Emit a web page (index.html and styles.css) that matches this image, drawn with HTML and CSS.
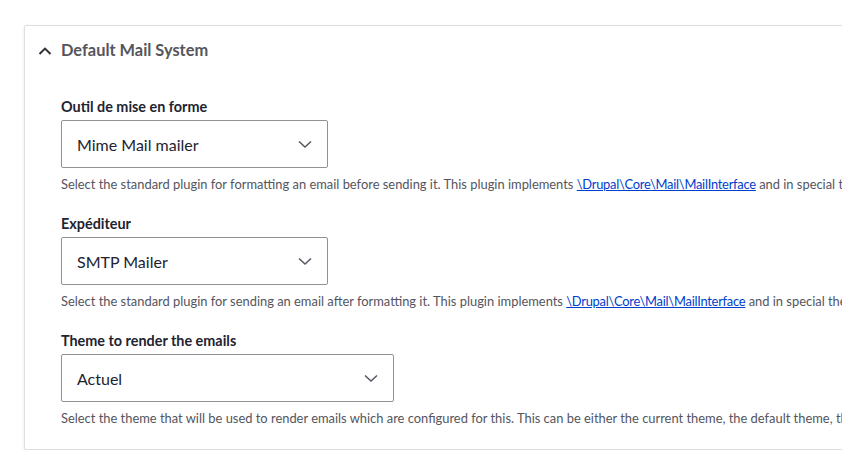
FILE: index.html
```html
<!DOCTYPE html>
<html lang="fr">
<head>
<meta charset="utf-8">
<title>Default Mail System</title>
<link rel="stylesheet" href="styles.css">
</head>
<body>
<div class="page">
  <section class="card">
    <div class="summary">
      <svg class="summary-icon" width="14" height="8" viewBox="0 0 14 8" aria-hidden="true"><path d="M1.5 7 L7 1.6 L12.5 7" fill="none" stroke="#303138" stroke-width="2"/></svg>
      <span class="summary-title">Default Mail System</span>
    </div>
    <div class="content">
      <div class="form-item">
        <label class="label">Outil de mise en forme</label>
        <div class="select">
          <span class="select-value">Mime Mail mailer</span>
          <svg class="select-icon" width="14" height="9" viewBox="0 0 14 9" aria-hidden="true"><path d="M1 1.5 L7 7 L13 1.5" fill="none" stroke="#545560" stroke-width="1.5"/></svg>
        </div>
        <div class="description">Select the standard plugin for formatting an email before sending it. This plugin implements <a href="#">\Drupal\Core\Mail\MailInterface</a> and in special the <a href="#">\Drupal\Core\Mail\MailInterface::format</a> function.</div>
      </div>
      <div class="form-item">
        <label class="label">Expéditeur</label>
        <div class="select">
          <span class="select-value">SMTP Mailer</span>
          <svg class="select-icon" width="14" height="9" viewBox="0 0 14 9" aria-hidden="true"><path d="M1 1.5 L7 7 L13 1.5" fill="none" stroke="#545560" stroke-width="1.5"/></svg>
        </div>
        <div class="description">Select the standard plugin for sending an email after formatting it. This plugin implements <a href="#">\Drupal\Core\Mail\MailInterface</a> and in special the <a href="#">\Drupal\Core\Mail\MailInterface::mail</a> function.</div>
      </div>
      <div class="form-item">
        <label class="label">Theme to render the emails</label>
        <div class="select select-wide">
          <span class="select-value">Actuel</span>
          <svg class="select-icon" width="14" height="9" viewBox="0 0 14 9" aria-hidden="true"><path d="M1 1.5 L7 7 L13 1.5" fill="none" stroke="#545560" stroke-width="1.5"/></svg>
        </div>
        <div class="description">Select the theme that will be used to render emails which are configured for this. This can be either the current theme, the default theme, the domain theme or any active theme.</div>
      </div>
    </div>
  </section>
</div>
</body>
</html>
```
FILE: styles.css
```css
html, body {
  margin: 0;
  padding: 0;
  background: #ffffff;
  overflow: hidden;
}
body {
  font-family: Lato, "Noto Sans", sans-serif;
  color: #222330;
}
.page {
  padding: 25px 0 0 24px;
  width: 1400px;
}
.card {
  width: 1300px;
  border: 1px solid #dedfe4;
  border-radius: 2px;
  background: #fff;
  box-shadow: 0 1px 3px rgba(0, 0, 0, 0.10);
}
.summary {
  position: relative;
  padding: 16px 16px 16px 36px;
  height: 16px;
  line-height: 16px;
}
.summary-icon {
  position: absolute;
  left: 13px;
  top: 21px;
}
.summary-title {
  font-size: 16.4px;
  font-weight: 700;
  color: #55565b;
  display: block;
  line-height: 16px;
}
.content {
  padding: 24px 0 22px 36px;
}
.form-item + .form-item {
  margin-top: 22px;
}
.label {
  display: block;
  font-size: 14.4px;
  font-weight: 700;
  line-height: 18px;
  margin-bottom: 4px;
  color: #222330;
}
.select {
  box-sizing: border-box;
  width: 267px;
  height: 48px;
  border: 1px solid #919297;
  border-radius: 2px;
  display: flex;
  align-items: center;
  justify-content: space-between;
  padding: 0 15px 0 15px;
}
.select-wide {
  width: 333px;
}
.select-value {
  font-size: 16px;
  color: #222330;
}
.description {
  margin-top: 8px;
  font-size: 12.9px;
  line-height: 17px;
  color: #545560;
  white-space: nowrap;
}
.description a {
  color: #003ecc;
  text-decoration: underline;
  letter-spacing: -0.25px;
}
```
